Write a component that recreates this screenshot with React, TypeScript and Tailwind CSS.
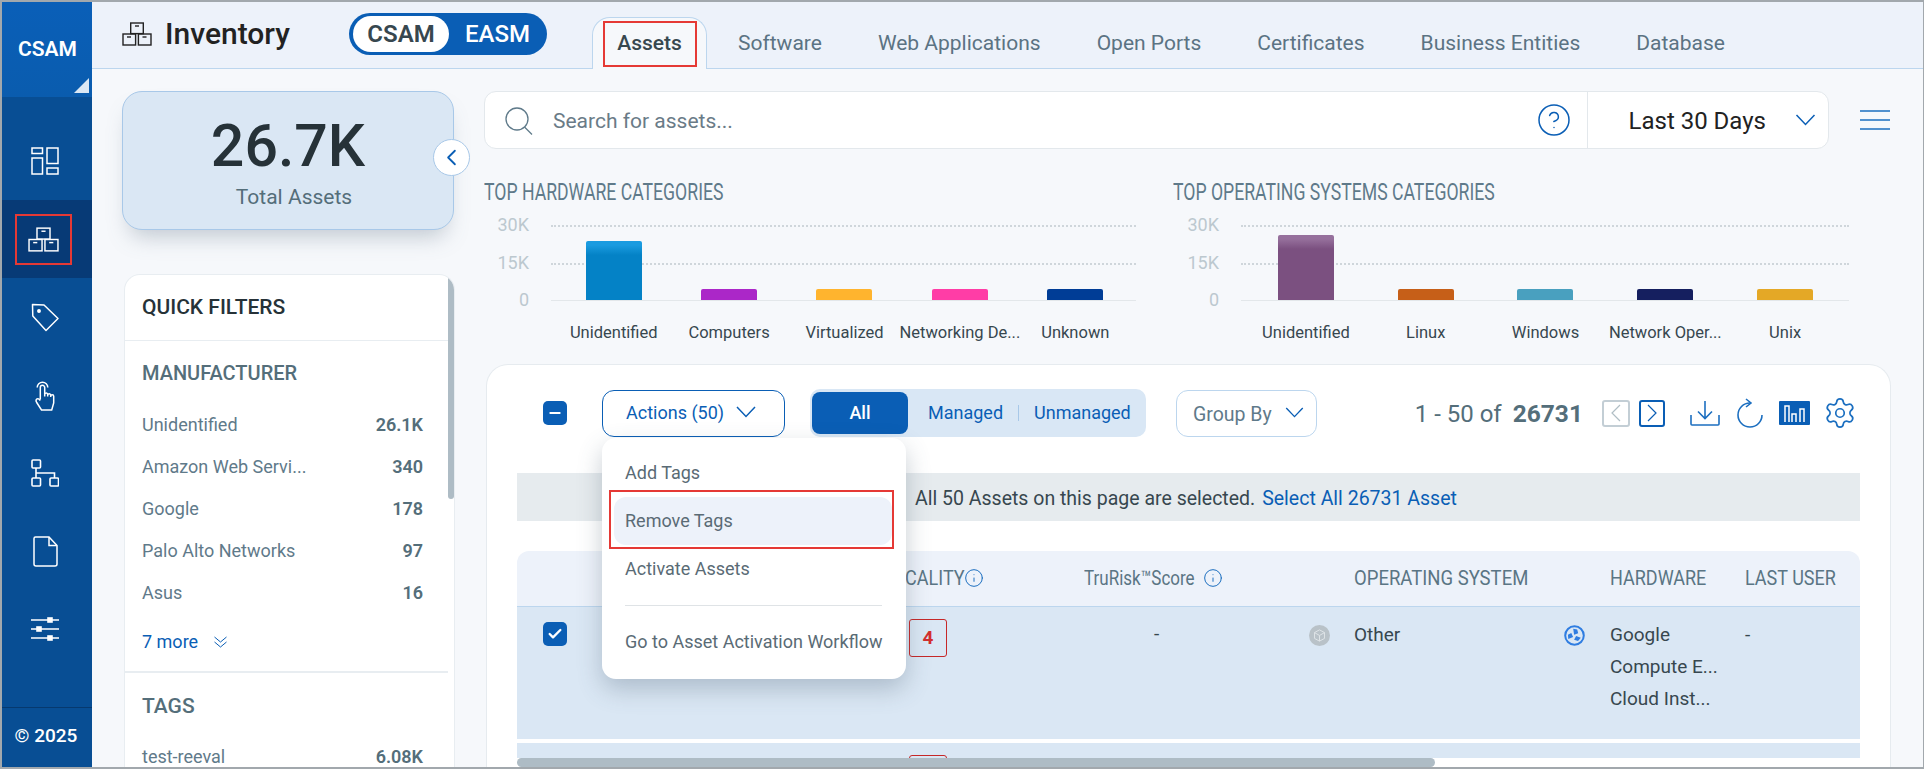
import { ChevronLeft, Settings, Info, Check, Minus, CircleHelp } from "lucide-react";

const TABS = ["Software", "Web Applications", "Open Ports", "Certificates", "Business Entities", "Database"];

const MANUFACTURERS = [
  { name: "Unidentified", count: "26.1K" },
  { name: "Amazon Web Servi...", count: "340" },
  { name: "Google", count: "178" },
  { name: "Palo Alto Networks", count: "97" },
  { name: "Asus", count: "16" },
];

const HARDWARE = [
  { label: "Unidentified", h: "h-[59px]", bar: "bg-[linear-gradient(#1a9be0_0,#1a9be0_4px,#0482c6_14px)]" },
  { label: "Computers", h: "h-[11px]", bar: "bg-[#ab27c8]" },
  { label: "Virtualized", h: "h-[11px]", bar: "bg-[#ffb42e]" },
  { label: "Networking De...", h: "h-[11px]", bar: "bg-[#ff3da6]" },
  { label: "Unknown", h: "h-[11px]", bar: "bg-[#003d96]" },
];

const OS = [
  { label: "Unidentified", h: "h-[65px]", bar: "bg-[linear-gradient(#96709c_0,#96709c_4px,#7b5080_14px)]" },
  { label: "Linux", h: "h-[11px]", bar: "bg-[#c65f18]" },
  { label: "Windows", h: "h-[11px]", bar: "bg-[#49a0bf]" },
  { label: "Network Oper...", h: "h-[11px]", bar: "bg-[#151f5f]" },
  { label: "Unix", h: "h-[11px]", bar: "bg-[#e4a826]" },
];

const Chev = ({ className }: { className: string }) => (
  <svg viewBox="0 0 20 12" fill="none" stroke="currentColor" strokeWidth="1.5" className={className}>
    <path d="M1 1l9 9.5L19 1" />
  </svg>
);

const Boxes = ({ className }: { className: string }) => (
  <svg viewBox="0 0 30 24" fill="none" stroke="currentColor" strokeWidth="1.4" className={className}>
    <rect x="8.7" y="1" width="12.6" height="10.6" />
    <path d="M13 4h4" />
    <rect x="1" y="12" width="12.6" height="11" />
    <path d="M5 15h4" />
    <rect x="16.4" y="12" width="12.6" height="11" />
    <path d="M20.5 15h4" />
  </svg>
);

const SideIcon = ({ name }: { name: string }) => {
  const cls = "text-white";
  if (name === "dash")
    return (
      <svg viewBox="0 0 28 28" fill="none" stroke="currentColor" strokeWidth="1.5" className={`${cls} w-[28px] h-[28px]`}>
        <rect x="1" y="1" width="10.5" height="5.5" />
        <rect x="1" y="11" width="10.5" height="16" />
        <rect x="16" y="1" width="11" height="15.5" />
        <rect x="16" y="21" width="11" height="6" />
      </svg>
    );
  if (name === "boxes") return <Boxes className={`${cls} w-[31px] h-[25px]`} />;
  if (name === "tag")
    return (
      <svg viewBox="0 0 28 29" fill="none" stroke="currentColor" strokeWidth="1.5" className={`${cls} w-[28px] h-[29px]`}>
        <path d="M1.5 1.5l11.5.5L27 15.5 15 27.5 1.8 13z" strokeLinejoin="round" />
        <circle cx="8" cy="8" r="1.2" fill="currentColor" />
      </svg>
    );
  if (name === "hand")
    return (
      <svg viewBox="0 0 20 31" fill="none" stroke="currentColor" strokeWidth="1.5" className={`${cls} w-[20px] h-[31px]`}>
        <path d="M2.2 7.5a5.3 5.3 0 0110.6 0" />
        <path d="M5.3 19.5V7.5a2.2 2.2 0 014.4 0V14" />
        <path d="M9.7 16.5V14.6a1.5 1.5 0 013 0v2M12.7 16.5v-1.2a1.5 1.5 0 013 0v1.7M15.7 17v-.7a1.5 1.5 0 013 0V23l-2 7H6.5L1.7 22.5c-.9-1.6-.7-3 .3-3.6 1.2-.6 2.3.1 3.3 1.6" />
      </svg>
    );
  if (name === "org")
    return (
      <svg viewBox="0 0 28 28" fill="none" stroke="currentColor" strokeWidth="1.6" className={`${cls} w-[28px] h-[28px]`}>
        <rect x="1" y="1" width="8.5" height="8" rx="1" />
        <rect x="1" y="19" width="8.5" height="8" rx="1" />
        <rect x="19" y="19" width="8.5" height="8" rx="1" />
        <path d="M5 9v10M5 14h18.5v5" />
      </svg>
    );
  if (name === "file")
    return (
      <svg viewBox="0 0 25 31" fill="none" stroke="currentColor" strokeWidth="1.5" className={`${cls} w-[25px] h-[31px]`}>
        <path d="M2.5 1H16l8 8.5V28a2 2 0 01-2 2H3a2 2 0 01-2-2V2.5A1.5 1.5 0 012.5 1z" />
        <path d="M16 1v8.5h8" />
      </svg>
    );
  return (
    <svg viewBox="0 0 28 24" fill="none" stroke="currentColor" strokeWidth="1.6" className={`${cls} w-[28px] h-[24px]`}>
      <path d="M0 3h28M0 12h28M0 21h28" />
      <rect x="17" y="1" width="4" height="4" fill="currentColor" />
      <rect x="6" y="10" width="4" height="4" fill="currentColor" />
      <rect x="17" y="19" width="4" height="4" fill="currentColor" />
    </svg>
  );
};

const NAV = ["dash", "boxes", "tag", "hand", "org", "file", "sliders"];

const Sidebar = () => (
  <aside className="w-[90px] shrink-0 flex flex-col bg-[#084e94]">
    <div className="relative h-[95px] shrink-0 bg-[linear-gradient(#0a5fb8,#0a5cae)] pt-[36px] pl-[16px]">
      <span className="block text-[21px] leading-[22px] font-semibold text-white">CSAM</span>
      <div className="absolute right-[3px] bottom-[4px] w-[15px] h-[15px] bg-[#dae7f4] [clip-path:polygon(100%_0,100%_100%,0_100%)]" />
    </div>
    <div className="flex-1 pt-[25px]">
      {NAV.map((n) =>
        n === "boxes" ? (
          <div key={n} className="h-[78px] bg-[#073a76] flex items-center justify-center pr-[8px]">
            <div className="w-[57px] h-[51px] border-2 border-[#e53935] flex items-center justify-center">
              <SideIcon name={n} />
            </div>
          </div>
        ) : (
          <div key={n} className="h-[78px] flex items-center justify-center pr-[4px]">
            <SideIcon name={n} />
          </div>
        )
      )}
    </div>
    <div className="h-[60px] shrink-0 border-t border-[#06396f] flex items-center justify-center pb-[2px] pr-[2px]">
      <span className="text-[19px] font-medium text-white">© 2025</span>
    </div>
  </aside>
);

const TopBar = () => (
  <header className="h-[67px] shrink-0 bg-[#edf2fa] border-b border-[#bcd6ee] flex pl-[30px]">
    <div className="w-[227px] flex items-center gap-[13px] pb-[2px]">
      <Boxes className="w-[30px] h-[24px] text-[#222]" />
      <span className="text-[30px] font-medium text-[#222] leading-none">Inventory</span>
    </div>
    <div className="mt-[11px] w-[198px] h-[42px] rounded-full bg-[#0a5eb5] flex items-center pl-[4px]">
      <div className="w-[96px] h-[36px] rounded-full bg-white flex items-center justify-center text-[24px] font-semibold text-[#37474f]">CSAM</div>
      <span className="ml-[16px] text-[24px] font-medium text-white">EASM</span>
    </div>
    <div className="ml-[45px] flex items-end">
      <div className="w-[115px] h-[52px] -mb-px rounded-t-[18px] border border-b-0 border-[#bcd6ee] bg-[#f6f8fb] flex items-start justify-center pt-[3px]">
        <div className="w-[94px] h-[46px] border-2 border-[#e53935] flex items-center justify-center text-[21px] font-medium text-[#37474f]">Assets</div>
      </div>
      <nav className="ml-[31px] flex gap-[56px] h-[48px] items-center text-[21px] text-[#5b7383]">
        {TABS.map((t) => (
          <span key={t} className="whitespace-nowrap">{t}</span>
        ))}
      </nav>
    </div>
  </header>
);

const LeftColumn = () => (
  <div className="w-[393px] shrink-0 pl-[30px] pt-[22px] flex flex-col min-h-0">
    <div className="relative w-[332px] h-[139px] shrink-0 rounded-[20px] bg-[#dae7f4] border border-[#a8c8e8] shadow-[0_14px_22px_-8px_rgba(90,110,130,.35)] flex flex-col items-center pt-[18px]">
      <span className="text-[59px] leading-[72px] font-medium text-[#263238]">26.7K</span>
      <span className="mt-[3px] pl-[12px] text-[21px] leading-[24px] text-[#546e7a]">Total Assets</span>
      <button className="absolute -right-[17px] top-[47px] w-[37px] h-[37px] rounded-full bg-white border border-[#a8c8e8] flex items-center justify-center">
        <ChevronLeft size={27} strokeWidth={1.6} className="text-[#0a5eb5]" />
      </button>
    </div>
    <div className="relative mt-[44px] ml-[2px] w-[331px] flex-1 min-h-0 overflow-hidden rounded-t-[16px] bg-white border border-b-0 border-[#e8edf1] pr-[6px]">
      <div className="absolute right-0 top-0 w-[6px] h-[224px] rounded-full bg-[#aebcc5]" />
      <div className="h-[66px] border-b border-[#e8edf1] pl-[17px] flex items-center text-[21px] font-medium text-[#263238]">QUICK FILTERS</div>
      <div className="pl-[17px] pr-[25px] pt-[20px] h-[332px] border-b-2 border-[#e8edf1]">
        <div className="text-[20px] leading-[24px] font-medium text-[#546e7a]">MANUFACTURER</div>
        <div className="mt-[18px]">
          {MANUFACTURERS.map((m) => (
            <div key={m.name} className="h-[42px] flex items-center justify-between text-[18px]">
              <span className="text-[#5f7a8a]">{m.name}</span>
              <span className="font-semibold text-[#546e7a]">{m.count}</span>
            </div>
          ))}
        </div>
        <div className="mt-[15px] flex items-center gap-[16px] text-[18px] text-[#0a5eb5]">
          <span>7 more</span>
          <svg viewBox="0 0 13 12" fill="none" stroke="currentColor" strokeWidth="1" className="w-[13px] h-[12px]">
            <path d="M.5 1l6 5 6-5M.5 6l6 5 6-5" />
          </svg>
        </div>
      </div>
      <div className="pl-[17px] pr-[25px] pt-[21px]">
        <div className="text-[21px] leading-[24px] font-medium text-[#546e7a]">TAGS</div>
        <div className="mt-[26px] h-[24px] flex items-center justify-between text-[18px]">
          <span className="text-[#5f7a8a]">test-reeval</span>
          <span className="font-semibold text-[#546e7a]">6.08K</span>
        </div>
      </div>
    </div>
  </div>
);

type Bar = { label: string; h: string; bar: string };

const Chart = ({ title, data, titleW, axisW, plotW, colsPad }: { title: string; data: Bar[]; titleW: string; axisW: string; plotW: string; colsPad: string }) => (
  <div>
    <div className={`h-[28px] flex items-center ${titleW}`}>
      <span className="block w-max -ml-px whitespace-nowrap origin-left scale-x-[.735] text-[24px] text-[#5f7a8a]">{title}</span>
    </div>
    <div className="mt-[19px] flex">
      <div className={`relative h-[75px] ${axisW} shrink-0 text-[18px] text-[#bcc8cf] leading-[22px]`}>
        <div className="absolute right-[22px] -top-[11px]">30K</div>
        <div className="absolute right-[22px] top-[27px]">15K</div>
        <div className="absolute right-[22px] -bottom-[11px]">0</div>
      </div>
      <div className={`relative h-[76px] ${plotW}`}>
        <div className="absolute inset-x-0 top-0 border-t-2 border-dotted border-[#cfd6db]" />
        <div className="absolute inset-x-0 top-[38px] border-t-2 border-dotted border-[#cfd6db]" />
        <div className={`relative h-full grid grid-cols-5 items-end border-b border-[#e3e7ea] ${colsPad}`}>
          {data.map((d) => (
            <div key={d.label} className={`mx-auto w-[56px] rounded-t-[2px] ${d.h} ${d.bar}`} />
          ))}
        </div>
      </div>
    </div>
    <div className="mt-[22px] flex">
      <div className={`${axisW} shrink-0`} />
      <div className={`${plotW} grid grid-cols-5 ${colsPad} text-[16.5px] leading-[20px] text-[#37474f]`}>
        {data.map((d) => (
          <div key={d.label} className="flex justify-center whitespace-nowrap">{d.label}</div>
        ))}
      </div>
    </div>
  </div>
);

const Toolbar = () => (
  <div className="h-[48px] flex items-center">
    <div className="ml-[26px] w-[24px] h-[24px] rounded-[5px] bg-[#0a5eb5] flex items-center justify-center">
      <Minus size={16} strokeWidth={3} className="text-white" />
    </div>
    <div className="relative ml-[35px] w-[183px] h-[47px]">
      <button className="w-full h-full rounded-[12px] border border-[#0a5eb5] flex items-center pl-[23px] pb-[2px] gap-[12px] text-[18px] text-[#0a5eb5]">
        <span>Actions (50)</span>
        <Chev className="w-[20px] h-[12px]" />
      </button>
      <ActionsMenu />
    </div>
    <div className="ml-[25px] w-[336px] h-[48px] rounded-[10px] bg-[#d9e7f5] flex items-center pl-[2px] text-[18px] text-[#0a5eb5]">
      <div className="w-[96px] h-[42px] rounded-[8px] bg-[#0a5eb5] text-white font-medium flex items-center justify-center pb-[2px]">All</div>
      <span className="ml-[20px] pb-[2px]">Managed</span>
      <div className="ml-[15px] w-px h-[16px] bg-[#a8c8e8]" />
      <span className="ml-[15px] pb-[2px]">Unmanaged</span>
    </div>
    <div className="ml-[30px] w-[141px] h-[47px] rounded-[12px] border border-[#bcd6ee] flex items-center pl-[16px] gap-[13px] text-[19.5px] text-[#5f7a8a]">
      <span className="pt-[3px]">Group By</span>
      <Chev className="-mt-[2px] w-[19px] h-[11px] text-[#0a5eb5]" />
    </div>
    <div className="ml-auto mr-[3px] flex items-center text-[#546e7a]">
      <span className="pt-[2px] text-[24px]">1 - 50 of</span>
      <span className="ml-[11px] pt-[2px] text-[24.5px] font-bold">26731</span>
      <div className="ml-[19px] w-[28px] h-[27px] rounded-[3px] border-2 border-[#c3ced5] flex items-center justify-center">
        <svg viewBox="0 0 10 18" fill="none" stroke="#b0bec5" strokeWidth="1.2" className="w-[10px] h-[18px]"><path d="M9 1L1 9l8 8" /></svg>
      </div>
      <div className="ml-[9px] w-[26px] h-[27px] rounded-[3px] border-2 border-[#0a5eb5] flex items-center justify-center">
        <svg viewBox="0 0 10 18" fill="none" stroke="#0a5eb5" strokeWidth="1.2" className="w-[10px] h-[18px]"><path d="M1 1l8 8-8 8" /></svg>
      </div>
      <svg viewBox="0 0 30 25" fill="none" stroke="#1c6fc0" strokeWidth="1.6" className="ml-[25px] w-[30px] h-[25px]">
        <path d="M15 0v17M8 10.5l7 7 7-7M1 14v9a1 1 0 001 1h26a1 1 0 001-1v-9" />
      </svg>
      <svg viewBox="0 0 26 30" fill="none" stroke="#1c6fc0" strokeWidth="1.6" className="ml-[17px] w-[26px] h-[30px]">
        <path d="M13 5A12 12 0 1 0 25 17" />
        <path d="M9 1l5 4-5 4" />
      </svg>
      <svg viewBox="0 0 31 24" className="ml-[16px] w-[31px] h-[24px]">
        <rect width="31" height="24" rx="1" fill="#0a5eb5" />
        <path d="M6 21V5h4v16M13 21v-8h4v8M21 21V8h4v13" fill="none" stroke="#fff" strokeWidth="1.5" />
      </svg>
      <Settings size={34} strokeWidth={1.2} className="ml-[13px] text-[#1c6fc0]" />
    </div>
  </div>
);

const ActionsMenu = () => (
  <div className="absolute left-0 top-[48px] z-10 w-[304px] h-[241px] rounded-[14px] bg-white shadow-[0_10px_24px_rgba(70,90,110,.3)] pt-[11px] px-[12px] text-[18px] text-[#5a6b75]">
    <div className="h-[48px] flex items-center pl-[11px]">Add Tags</div>
    <div className="relative h-[48px] w-[278px] rounded-[12px] bg-[#edf2fa] flex items-center pl-[11px]">
      Remove Tags
      <div className="absolute -left-[5px] -top-[7px] -right-[2px] -bottom-[4px] border-2 border-[#e53935]" />
    </div>
    <div className="h-[48px] flex items-center pl-[11px]">Activate Assets</div>
    <div className="mt-[12px] mx-[11px] w-[257px] border-t border-[#dfe3e6]" />
    <div className="mt-[12px] h-[48px] flex items-center pl-[11px] whitespace-nowrap">Go to Asset Activation Workflow</div>
  </div>
);

const TableHead = () => (
  <div className="h-[56px] rounded-t-[12px] bg-[#edf2fa] border-b border-[#bcd6ee] grid grid-cols-[345px_222px_270px_256px_135px_116px] items-center pb-[2px] text-[20px] text-[#5a7584]">
    <div />
    <div className="flex items-center">
      <span className="block w-[102px] whitespace-nowrap origin-left scale-x-[.9]">CRITICALITY</span>
      <Info size={20} strokeWidth={1.2} className="text-[#1c6fc0]" />
    </div>
    <div className="flex items-center">
      <span className="block w-[119px] whitespace-nowrap origin-left scale-x-[.85]">TruRisk™Score</span>
      <Info size={20} strokeWidth={1.2} className="text-[#1c6fc0]" />
    </div>
    <span className="block whitespace-nowrap origin-left scale-x-[.925]">OPERATING SYSTEM</span>
    <span className="block whitespace-nowrap origin-left scale-x-[.9]">HARDWARE</span>
    <span className="block whitespace-nowrap origin-left scale-x-[.9]">LAST USER</span>
  </div>
);

const Row = () => (
  <div className="h-[132px] bg-[#dae7f4] grid grid-cols-[392px_175px_225px_45px_210px_46px_135px_116px] text-[19px] leading-[32px] text-[#37474f]">
    <div className="pl-[26px] pt-[15px]">
      <div className="w-[24px] h-[24px] rounded-[5px] bg-[#0a5eb5] flex items-center justify-center">
        <Check size={16} strokeWidth={3.5} className="text-white" />
      </div>
    </div>
    <div className="pt-[12px]">
      <div className="w-[38px] h-[38px] rounded-[3px] border border-[#c62828] flex items-center justify-center font-bold text-[#d32f2f]">4</div>
    </div>
    <div className="pl-[70px] pt-[11px]">-</div>
    <div className="pt-[18px]">
      <div className="w-[21px] h-[21px] rounded-full bg-[#b9c2c8] flex items-center justify-center">
        <svg viewBox="0 0 12 12" fill="none" stroke="#dfe4e7" strokeWidth=".9" className="w-[13px] h-[13px]">
          <path d="M6 .8l4.6 2.5v5.4L6 11.2 1.4 8.7V3.3zM1.4 3.3L6 6l4.6-2.7M6 6v5.2" />
        </svg>
      </div>
    </div>
    <div className="pt-[12px]">Other</div>
    <div className="pt-[18px]">
      <svg viewBox="0 0 21 21" className="w-[21px] h-[21px]">
        <circle cx="10.5" cy="10.5" r="9.3" fill="none" stroke="#2f7de1" strokeWidth="2" />
        <path d="M9.2 3.8l4 .8 1 3.6-4.1 1.5zM4.3 14l-.4-4.2 3.4-1.9 1.8 4zM16.8 12.8l-2.8 3.300-3.900-1.400 2-3.800z" fill="#2f7de1" />
      </svg>
    </div>
    <div className="pt-[12px]">
      <div>Google</div>
      <div>Compute E...</div>
      <div>Cloud Inst...</div>
    </div>
    <div className="pt-[12px]">-</div>
  </div>
);

const App = () => (
  <div className="w-[1924px] h-[769px] flex overflow-hidden bg-[#f6f8fb] border-t-2 border-l-2 border-b-2 border-r border-[#a2a8ad] [font-family:Roboto,sans-serif]">
    <Sidebar />
    <div className="flex-1 min-w-0 flex flex-col">
      <TopBar />
      <div className="flex-1 min-h-0 flex">
        <LeftColumn />
        <div className="flex-1 min-w-0 flex flex-col pt-[22px]">
          <div className="flex items-center">
            <div className="-ml-px w-[1345px] h-[58px] rounded-[12px] bg-white border border-[#e3e8ec] flex items-center">
              <svg viewBox="0 0 28 28" fill="none" stroke="#5f7a8a" strokeWidth="1.3" className="ml-[20px] mt-[2px] w-[28px] h-[28px]">
                <circle cx="12" cy="12" r="11" />
                <path d="M19.5 20l7.5 7.5" />
              </svg>
              <span className="ml-[20px] pt-[3px] text-[21px] text-[#6a7b87]">Search for assets...</span>
              <CircleHelp size={36} strokeWidth={1} className="ml-auto text-[#0a5eb5]" />
              <div className="ml-[15px] w-px h-full bg-[#e3e8ec]" />
              <span className="ml-[41px] pt-[2px] text-[24px] text-[#222] whitespace-nowrap">Last 30 Days</span>
              <Chev className="ml-[29px] mr-[12px] w-[21px] h-[12px] text-[#0a5eb5]" />
            </div>
            <svg viewBox="0 0 30 20" fill="none" stroke="#1c6fc0" strokeWidth="1.5" className="ml-[31px] w-[30px] h-[20px]">
              <path d="M0 1h30M0 10h30M0 19h30" />
            </svg>
          </div>
          <div className="mt-[29px] flex gap-[38px]">
            <Chart title="TOP HARDWARE CATEGORIES" data={HARDWARE} titleW="w-[651px]" axisW="w-[66px]" plotW="w-[585px]" colsPad="pl-[5px] pr-[3px]" />
            <Chart title="TOP OPERATING SYSTEMS CATEGORIES" data={OS} titleW="w-[675px]" axisW="w-[67px]" plotW="w-[608px]" colsPad="pl-[5px] pr-[4px]" />
          </div>
          <section className="relative mt-[21px] ml-px w-[1405px] flex-1 min-h-0 overflow-hidden rounded-t-[22px] bg-white border border-b-0 border-[#e6ebef] pt-[24px] px-[30px]">
            <Toolbar />
            <div className="mt-[36px] h-[48px] bg-[#e6ebee] flex items-center pl-[398px] pt-[3px] text-[19.5px]">
              <span className="text-[#37474f]">All 50 Assets on this page are selected.</span>
              <span className="ml-[7px] text-[#0a5eb5]">Select All 26731 Asset</span>
            </div>
            <div className="mt-[30px]">
              <TableHead />
              <Row />
              <div className="mt-[4px] h-[15px] overflow-hidden bg-[#dae7f4] pl-[392px] pt-[12px]">
                <div className="w-[38px] h-[38px] rounded-[3px] border border-[#c62828]" />
              </div>
            </div>
            <div className="absolute left-[30px] bottom-0 w-[918px] h-[9px] rounded-full bg-[#aebcc5]" />
          </section>
        </div>
      </div>
    </div>
  </div>
);

export default App;
